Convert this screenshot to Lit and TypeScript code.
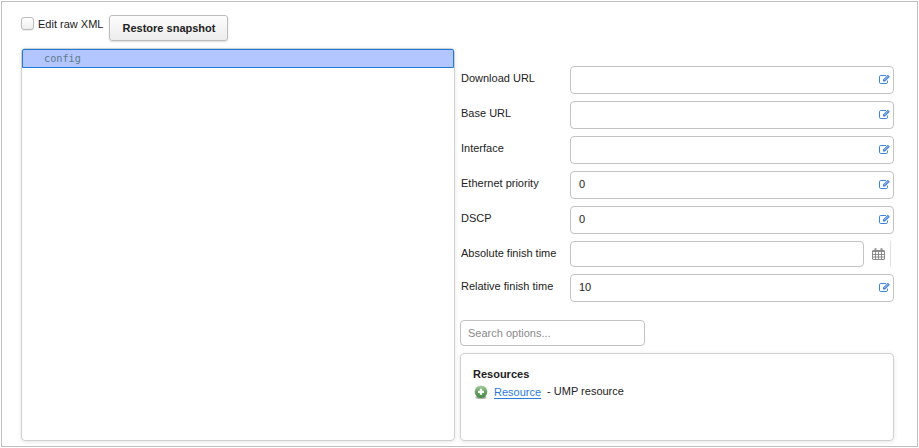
import { LitElement, html, css } from "lit";
import { customElement } from "lit/decorators.js";

interface Field {
  label: string;
  value: string;
  kind: "text" | "date";
}

const FIELDS: Field[] = [
  { label: "Download URL", value: "", kind: "text" },
  { label: "Base URL", value: "", kind: "text" },
  { label: "Interface", value: "", kind: "text" },
  { label: "Ethernet priority", value: "0", kind: "text" },
  { label: "DSCP", value: "0", kind: "text" },
  { label: "Absolute finish time", value: "", kind: "date" },
  { label: "Relative finish time", value: "10", kind: "text" },
];

const editIcon = html`<svg class="edit" viewBox="0 0 11 11">
  <path class="page" d="M7 1.5H1.8Q0.5 1.5 0.5 2.8V8.2Q0.5 9.5 1.8 9.5H7.2Q8.5 9.5 8.5 8.2V6.6" />
  <path class="pen" d="M4 5.6L8.9 0.8L10.8 2.7L6 7.5H4Z" />
  <path class="shine" d="M5.3 6L9 2.3" />
</svg>`;

const calendarIcon = html`<svg class="calendar" viewBox="0 0 13 12">
  <rect x="0.5" y="2.5" width="12" height="9" rx="0.5" />
  <path d="M0.5 3.5H12.5M0.5 6.5H12.5M0.5 9H12.5M3.5 4V11.5M6.5 4V11.5M9.5 4V11.5" />
  <path class="ring" d="M3.5 0.3V3.4M9.5 0.3V3.4" />
</svg>`;

const addIcon = html`<svg class="add" viewBox="0 0 14 15">
  <defs>
    <linearGradient id="ball" x1="0" y1="0" x2="0" y2="1">
      <stop offset="0" stop-color="#a9cfa2" />
      <stop offset="0.5" stop-color="#65a560" />
      <stop offset="1" stop-color="#4a874b" />
    </linearGradient>
  </defs>
  <ellipse cx="7" cy="12.4" rx="5.6" ry="1.6" fill="#000" opacity="0.3" />
  <circle cx="7" cy="6.8" r="6.3" fill="url(#ball)" />
  <path d="M7 3.8V9.8M4 6.8H10" stroke="#fff" stroke-width="2.2" />
</svg>`;

@customElement("app-root")
export class AppRoot extends LitElement {
  static styles = css`
    :host {
      display: block;
      height: 448px;
      padding: 1px;
      box-sizing: border-box;
      background: #fff;
      font: 11px/14px "Liberation Sans", Arial, sans-serif;
      color: #222;
    }
    * {
      box-sizing: border-box;
    }
    .frame {
      width: 917px;
      height: 446px;
      border: 1px solid #bfbfbf;
      padding: 13px 0 0 19px;
    }
    .toolbar {
      display: flex;
      align-items: flex-start;
      height: 33px;
    }
    .check {
      width: 13px;
      height: 13px;
      margin: 2px 4px 0 0;
      border: 1px solid #bbb;
      border-radius: 3px;
      background: linear-gradient(#fff, #eee);
      box-shadow: 0 1px 1px rgba(0, 0, 0, 0.08);
    }
    .check-label {
      width: 71px;
      margin-top: 2px;
      white-space: nowrap;
    }
    .restore {
      width: 119px;
      height: 26px;
      padding: 0 0 0 1px;
      border: 1px solid #bdbdbd;
      border-radius: 3px;
      background: linear-gradient(#fdfdfd, #ececec);
      box-shadow: 0 1px 2px rgba(0, 0, 0, 0.14);
      font: bold 11px/24px "Liberation Sans", Arial, sans-serif;
      color: #222;
    }
    .columns {
      display: flex;
      gap: 5px;
    }
    .tree {
      width: 434px;
      height: 393px;
      border: 1px solid #d0d0d0;
      border-radius: 4px;
      box-shadow: 0 1px 4px rgba(0, 0, 0, 0.1);
    }
    .node {
      height: 19px;
      border: 1px solid #1c7bdc;
      border-radius: 2px 2px 0 0;
      background: #b3c6ff;
      padding-left: 21px;
      font: 10.2px/17px "DejaVu Sans Mono", monospace;
      color: #5f7c88;
    }
    .form {
      width: 434px;
      padding-top: 18px;
    }
    .row {
      display: flex;
      height: 28px;
      margin-bottom: 7px;
    }
    .row.date {
      height: 26px;
    }
    .label {
      width: 110px;
      padding: 5px 0 0 1px;
      white-space: nowrap;
    }
    .input {
      display: flex;
      align-items: center;
      justify-content: space-between;
      width: 324px;
      padding: 0 3px 1px 8px;
      border: 1px solid #c2c2c2;
      border-radius: 4px;
    }
    .value {
      padding-bottom: 1px;
    }
    .date .input {
      width: 294px;
    }
    .picker {
      display: flex;
      align-items: center;
      width: 27px;
      padding-left: 8px;
      border-right: 1px solid #e0e0e0;
    }
    .edit {
      width: 11px;
      height: 11px;
      fill: none;
    }
    .page {
      stroke: #3d84e2;
    }
    .pen {
      fill: #3f7fdc;
    }
    .shine {
      stroke: #c3d8f7;
      stroke-width: 0.9;
    }
    .calendar {
      width: 13px;
      height: 12px;
      fill: none;
      stroke: #8c8c8c;
      stroke-width: 1;
    }
    .ring {
      stroke-width: 2;
    }
    .search {
      display: flex;
      align-items: center;
      width: 185px;
      height: 26px;
      margin-top: 18px;
      padding-left: 7px;
      border: 1px solid #c2c2c2;
      border-radius: 4px;
      color: #8a8a8a;
    }
    .resources {
      height: 88px;
      margin-top: 7px;
      padding: 13px 0 0 12px;
      border: 1px solid #d0d0d0;
      border-radius: 4px;
      box-shadow: 0 1px 4px rgba(0, 0, 0, 0.1);
    }
    .title {
      font-weight: bold;
    }
    .resource {
      display: flex;
      align-items: center;
      height: 14px;
      margin-top: 4px;
    }
    .add {
      width: 14px;
      height: 15px;
      margin: 1px 6px 0 1px;
    }
    .link {
      color: #2a7ae2;
      text-decoration: underline;
      text-underline-offset: 2px;
      margin-right: 6px;
    }
    .note {
      padding-bottom: 2px;
    }
  `;

  private renderField(f: Field) {
    return html`<div class="row ${f.kind}">
      <div class="label">${f.label}</div>
      <div class="input">
        <span class="value">${f.value}</span>${f.kind === "text" ? editIcon : ""}
      </div>
      ${f.kind === "date" ? html`<div class="picker">${calendarIcon}</div>` : ""}
    </div>`;
  }

  render() {
    return html`<div class="frame">
      <div class="toolbar">
        <span class="check"></span>
        <span class="check-label">Edit raw XML</span>
        <button class="restore">Restore snapshot</button>
      </div>
      <div class="columns">
        <div class="tree"><div class="node">config</div></div>
        <div class="form">
          ${FIELDS.map((f) => this.renderField(f))}
          <div class="search">Search options...</div>
          <div class="resources">
            <div class="title">Resources</div>
            <div class="resource">
              ${addIcon}<a class="link">Resource</a><span class="note">- UMP resource</span>
            </div>
          </div>
        </div>
      </div>
    </div>`;
  }
}
